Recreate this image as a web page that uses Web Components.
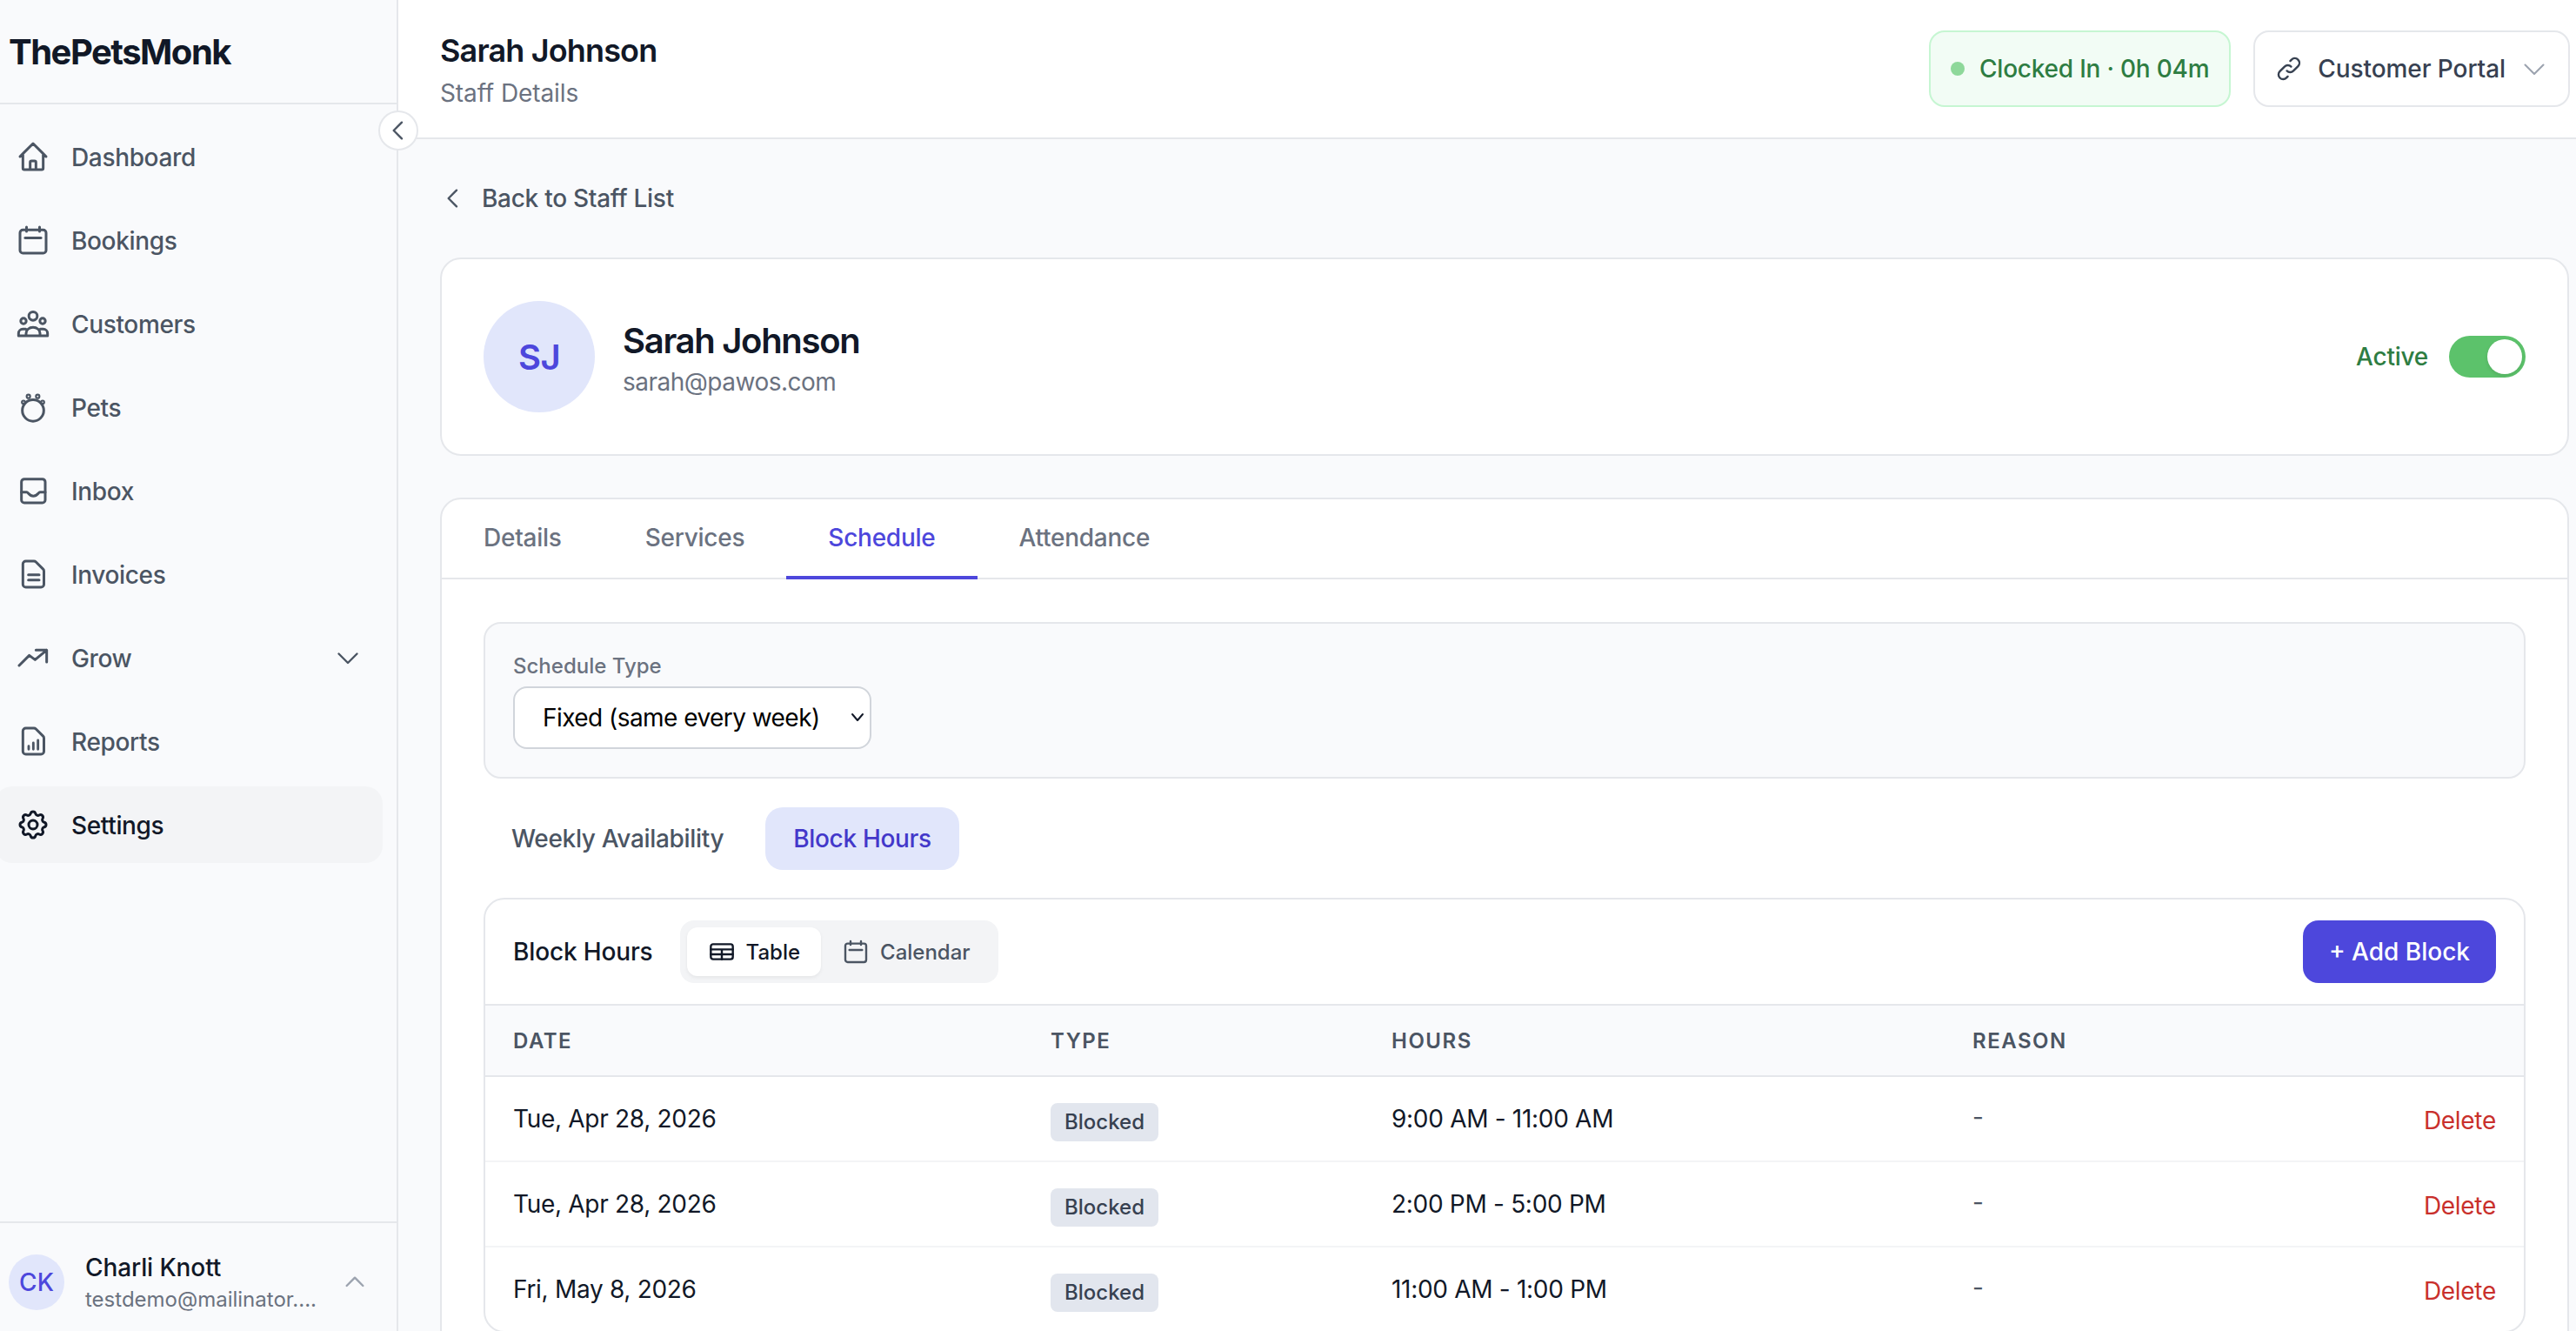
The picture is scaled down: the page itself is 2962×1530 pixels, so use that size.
<!DOCTYPE html>
<html lang="en">
<head>
<meta charset="utf-8">
<title>ThePetsMonk - Staff Details</title>
<style>
html,body{margin:0;padding:0;width:2962px;height:1530px;overflow:hidden;background:#f9fafc;font-family:Inter,"Noto Sans",sans-serif;color:#111827}
</style>
</head>
<body>
<pm-app>
  <pm-sidebar slot="side"></pm-sidebar>
  <pm-topbar slot="top" title="Sarah Johnson" sub="Staff Details"></pm-topbar>
  <pm-back-link>Back to Staff List</pm-back-link>
  <pm-profile-card name="Sarah Johnson" email="sarah@pawos.com" initials="SJ"></pm-profile-card>
  <pm-tabs-card>
    <pm-schedule-type></pm-schedule-type>
    <pm-subtabs></pm-subtabs>
    <pm-block-table>
      <pm-block-row date="Tue, Apr 28, 2026" hours="9:00 AM - 11:00 AM"></pm-block-row>
      <pm-block-row date="Tue, Apr 28, 2026" hours="2:00 PM - 5:00 PM"></pm-block-row>
      <pm-block-row date="Fri, May 8, 2026" hours="11:00 AM - 1:00 PM"></pm-block-row>
    </pm-block-table>
  </pm-tabs-card>
</pm-app>
<script>
const ICONS={
home:'<path d="M3 12l2-2m0 0l7-7 7 7M5 10v10a1 1 0 001 1h3m10-11l2 2m-2-2v10a1 1 0 01-1 1h-3m-6 0a1 1 0 001-1v-4a1 1 0 011-1h2a1 1 0 011 1v4a1 1 0 001 1m-6 0h6"/>',
calendar:'<rect x="3" y="5" width="18" height="16" rx="2"/><path d="M7.5 3v3M16.5 3v3M6.5 10.5h11"/>',
users:'<circle cx="12" cy="6.8" r="2.9"/><circle cx="5.4" cy="10.2" r="1.9"/><circle cx="18.6" cy="10.2" r="1.9"/><path d="M2 20.4h20M7.2 20.4v-1.6c0-2.4 2.1-4.3 4.8-4.3s4.8 1.9 4.8 4.3v1.6M2 20.4v-1.7c0-1.6 1.3-2.9 3-2.9h2M22 20.4v-1.7c0-1.6-1.3-2.9-3-2.9h-2"/>',
paw:'<circle cx="12" cy="14.3" r="7.4"/><circle cx="8.8" cy="4.6" r="1.2" stroke-width="1.3"/><circle cx="15.2" cy="4.6" r="1.2" stroke-width="1.3"/><circle cx="5.4" cy="8.6" r="1.1" stroke-width="1.3"/><circle cx="18.6" cy="8.6" r="1.1" stroke-width="1.3"/>',
inbox:'<rect x="4" y="4" width="16.4" height="16.4" rx="2"/><path d="M4 13h3.6c1.2 0 1.6 2.7 4.6 2.7s3.4-2.7 4.6-2.7h3.6"/>',
doc:'<path d="M7 3h5.6c.5 0 1 .2 1.4.6l4.9 4.9c.4.4.6.9.6 1.4V19a2 2 0 01-2 2H7a2 2 0 01-2-2V5a2 2 0 012-2z"/><path d="M8.8 12.4h7.4M8.8 16h7.4"/>',
report:'<path d="M7 3h5.6c.5 0 1 .2 1.4.6l4.9 4.9c.4.4.6.9.6 1.4V19a2 2 0 01-2 2H7a2 2 0 01-2-2V5a2 2 0 012-2z"/><path d="M9 15.4v2.2M12.2 13.2v4.4M15.4 11.4v6.2" stroke-width="1.7"/>',
trend:'<path d="M2.4 17.4l7-7 4 3 8-6.6M14 6.8h7.4V15"/>',
cog:'<path d="M10.325 4.317c.426-1.756 2.924-1.756 3.35 0a1.724 1.724 0 002.573 1.066c1.543-.94 3.31.826 2.37 2.37a1.724 1.724 0 001.065 2.572c1.756.426 1.756 2.924 0 3.35a1.724 1.724 0 00-1.066 2.573c.94 1.543-.826 3.31-2.37 2.37a1.724 1.724 0 00-2.572 1.065c-.426 1.756-2.924 1.756-3.35 0a1.724 1.724 0 00-2.573-1.066c-1.543.94-3.31-.826-2.37-2.37a1.724 1.724 0 00-1.065-2.572c-1.756-.426-1.756-2.924 0-3.35a1.724 1.724 0 001.066-2.573c-.94-1.543.826-3.31 2.37-2.37.996.608 2.296.07 2.572-1.065z"/><circle cx="12" cy="12" r="3"/>',
down:'<path d="M19 9l-7 7-7-7"/>',
up:'<path d="M5 15l7-7 7 7"/>',
left:'<path d="M15 19l-7-7 7-7"/>',
link:'<path d="M13.828 10.172a4 4 0 00-5.656 0l-4 4a4 4 0 105.656 5.656l1.102-1.101m-.758-4.899a4 4 0 005.656 0l4-4a4 4 0 00-5.656-5.656l-1.1 1.1"/>',
table:'<rect x="2.5" y="5.5" width="19" height="13" rx="2"/><path d="M2.5 10h19M2.5 14.2h19M12 10v8.5"/>'
};
function def(name,css,html,init){
  customElements.define(name,class extends HTMLElement{
    constructor(){super();this.attachShadow({mode:'open'});}
    connectedCallback(){
      const a=n=>this.getAttribute(n)||'';
      this.shadowRoot.innerHTML='<style>'+css+'</style>'+(typeof html==='function'?html(a):html);
      if(init)init.call(this);
    }
  });
}
def('pm-icon',':host{display:inline-flex;flex:none}svg{display:block;fill:none;stroke:currentColor;stroke-linecap:round;stroke-linejoin:round}',
 a=>`<svg viewBox="0 0 24 24" width="${a('size')||40}" height="${a('size')||40}" stroke-width="${a('sw')||1.8}">${ICONS[a('name')]}</svg>`);

def('pm-app',`:host{display:flex;width:2962px;height:1530px;overflow:hidden;position:relative}
 .main{flex:1;min-width:0;display:flex;flex-direction:column}
 .content{flex:1;min-height:0;overflow:hidden;padding:48px 8px 0 48px;display:flex;flex-direction:column}`,
 `<slot name="side"></slot><div class="main"><slot name="top"></slot><div class="content"><slot></slot></div></div>`);

def('pm-nav-item',`:host{display:flex;align-items:center;height:88px;padding:0 24px;gap:24px;border-radius:20px;font-size:28px;font-weight:500;color:#4b5563;line-height:36px;letter-spacing:-.35px}
 :host([active]){background:#f3f4f6;color:#111827}
 .l{flex:1;padding-top:2px}.c{margin-right:-2px}`,
 a=>`<pm-icon name="${a('icon')}"></pm-icon><span class="l"><slot></slot></span>${a('chev')?'<pm-icon class="c" name="down" size="36" sw="1.6"></pm-icon>':''}`);

def('pm-sidebar',`:host{display:flex;flex-direction:column;width:456px;flex:none;border-right:2px solid #e5e7eb;background:#f9fafc;position:relative;height:1530px;box-sizing:content-box}
 .logo{height:118px;border-bottom:2px solid #e5e7eb;display:flex;align-items:center;padding-left:10px;font-size:40px;font-weight:700;color:#111827;letter-spacing:-1.5px}
 nav{flex:1;display:flex;flex-direction:column;gap:8px;margin-left:-6px;padding:16px 16px 0 0}
 .collapse{position:absolute;top:127px;left:435px;width:46px;height:46px;box-sizing:border-box;border-radius:50%;border:2px solid #e5e7eb;background:#fff;color:#4b5563;display:flex;align-items:center;justify-content:center;z-index:5}
 .foot{height:112px;padding-top:12px;border-top:2px solid #e5e7eb;display:flex;align-items:center;padding-left:10px;gap:24px;position:relative}
 .av{width:64px;height:64px;border-radius:50%;background:#e1e6fb;color:#4d47dc;font-size:28px;font-weight:500;display:flex;align-items:center;justify-content:center;flex:none}
 .n{font-size:28px;font-weight:500;color:#111827;line-height:36px;letter-spacing:-.1px;padding-top:2px}
 .e{font-size:24px;color:#6b7280;line-height:36px;margin-top:1px;width:268px;white-space:nowrap}
 .u{color:#9ca3af;margin-left:2px}`,
 `<div class="logo">ThePetsMonk</div>
 <button class="collapse" style="padding:0"><pm-icon name="left" size="32" sw="1.8"></pm-icon></button>
 <nav>
  <pm-nav-item icon="home">Dashboard</pm-nav-item>
  <pm-nav-item icon="calendar">Bookings</pm-nav-item>
  <pm-nav-item icon="users">Customers</pm-nav-item>
  <pm-nav-item icon="paw">Pets</pm-nav-item>
  <pm-nav-item icon="inbox">Inbox</pm-nav-item>
  <pm-nav-item icon="doc">Invoices</pm-nav-item>
  <pm-nav-item icon="trend" chev="1">Grow</pm-nav-item>
  <pm-nav-item icon="report">Reports</pm-nav-item>
  <pm-nav-item icon="cog" active>Settings</pm-nav-item>
 </nav>
 <div class="foot"><div class="av">CK</div><div><div class="n">Charli Knott</div><div class="e">testdemo@mailinator....</div></div><pm-icon class="u" name="up" size="32" sw="1.8"></pm-icon></div>`);

def('pm-topbar',`:host{display:flex;align-items:center;height:158px;flex:none;background:#fff;border-bottom:2px solid #e5e7eb;padding:0 7px 0 48px}
 .t{flex:1}
 h1{margin:0;font-size:36px;font-weight:600;color:#111827;line-height:44px;padding-top:4px;letter-spacing:-.85px}
 p{margin:8px 0 0;font-size:28px;color:#6b7280;line-height:38px;letter-spacing:-.1px}
 .chip{height:88px;box-sizing:border-box;border-radius:18px;border:2px solid #c6f6d2;background:#f2fcf5;display:flex;align-items:center;font-size:28px;font-weight:500;color:#2e7d42;padding:0 23px;gap:17px;white-space:nowrap;letter-spacing:-.22px}
 .dot{width:16px;height:16px;border-radius:50%;background:#8ed89a;flex:none}
 .portal{margin-left:26px;height:88px;box-sizing:border-box;border-radius:18px;border:2px solid #e5e7eb;background:#fff;display:flex;align-items:center;font-size:28px;font-weight:500;color:#374151;padding:0 21px 0 23px;white-space:nowrap;letter-spacing:-.08px}
 .portal pm-icon:first-child{margin-right:17px}
 .portal .c{color:#9ca3af;margin-left:15px}`,
 a=>`<div class="t"><h1>${a('title')}</h1><p>${a('sub')}</p></div>
 <div class="chip"><span class="dot"></span>Clocked In · 0h 04m</div>
 <div class="portal"><pm-icon name="link" size="32" sw="1.8"></pm-icon>Customer Portal<pm-icon class="c" name="down" size="36" sw="1.4"></pm-icon></div>`);

def('pm-back-link',`:host{display:flex;align-items:center;height:40px;margin-bottom:48px;font-size:28px;font-weight:500;color:#4b5563;gap:17px;flex:none;letter-spacing:-.28px}
 pm-icon{margin-left:-1px}`,
 `<pm-icon name="left" size="32" sw="1.8"></pm-icon><span><slot></slot></span>`);

def('pm-profile-card',`:host{display:flex;align-items:center;flex:none;height:228px;box-sizing:border-box;background:#fff;border:2px solid #e5e7eb;border-radius:24px;padding:0 48px;margin-bottom:48px}
 .av{width:128px;height:128px;border-radius:50%;background:#e1e6fb;color:#4d47dc;font-size:40px;font-weight:600;display:flex;align-items:center;justify-content:center;flex:none;letter-spacing:-.5px}
 .i{flex:1;margin-left:32px;padding-top:4px}
 h2{margin:0;font-size:40px;font-weight:600;color:#111827;line-height:50px;letter-spacing:-1.3px}
 p{margin:0;font-size:28px;color:#6b7280;line-height:38px;margin-top:3px;letter-spacing:-.5px}
 .st{font-size:28px;font-weight:500;color:#2e7d42;margin-right:24px;letter-spacing:-.25px}
 .tg{width:88px;height:48px;border-radius:24px;background:#5cc26b;position:relative;flex:none}
 .k{position:absolute;top:4px;right:4px;width:40px;height:40px;border-radius:50%;background:#fff;box-shadow:0 2px 4px rgba(0,0,0,.1)}`,
 a=>`<div class="av">${a('initials')}</div><div class="i"><h2>${a('name')}</h2><p>${a('email')}</p></div><span class="st">Active</span><div class="tg"><span class="k"></span></div>`);

def('pm-tabs-card',`:host{display:block;flex:none;height:1200px;box-sizing:border-box;background:#fff;border:2px solid #e5e7eb;border-radius:24px}
 .tabs{display:flex;height:90px;border-bottom:2px solid #e5e7eb;letter-spacing:-.25px}
 .tab{height:92px;box-sizing:border-box;padding:0 48px 4px;display:flex;align-items:center;font-size:28px;font-weight:500;color:#6b7280}
 .tab.on{color:#4d47dc;border-bottom:4px solid #4d47dc;padding-bottom:0}
 .body{padding:49px 48px 48px;display:flex;flex-direction:column}`,
 `<div class="tabs"><div class="tab">Details</div><div class="tab">Services</div><div class="tab on">Schedule</div><div class="tab">Attendance</div></div><div class="body"><slot></slot></div>`);

def('pm-schedule-type',`:host{display:block;height:180px;box-sizing:border-box;background:#f9fafc;border:2px solid #e5e7eb;border-radius:20px;padding:32px}
 .l{font-size:24px;font-weight:500;color:#6b7280;line-height:34px;margin-bottom:6px}
 .s{width:412px;height:72px;box-sizing:border-box;background:#fff;border:2px solid #d1d5db;border-radius:16px;display:flex;align-items:center;padding-left:32px;font-size:28px;color:#000;position:relative;letter-spacing:-.55px}
 svg{position:absolute;left:386px;top:28px;fill:none;stroke:#111827;stroke-width:2;stroke-linecap:round;stroke-linejoin:round}`,
 `<div class="l">Schedule Type</div><div class="s">Fixed (same every week)<svg width="16" height="12" viewBox="0 0 16 12"><path d="M2 2l6 7 6-7"/></svg></div>`);

def('pm-subtabs',`:host{display:flex;gap:16px;margin-top:33px;height:72px;flex:none;letter-spacing:-.33px}
 .b{height:72px;box-sizing:border-box;padding:0 32px;border-radius:20px;display:flex;align-items:center;font-size:28px;font-weight:500;color:#4b5563}
 .b.on{background:#e1e6fb;color:#4338ca}`,
 `<div class="b">Weekly Availability</div><div class="b on">Block Hours</div>`);

def('pm-block-table',`:host{display:block;margin-top:32px;background:#fff;border:2px solid #e5e7eb;border-radius:24px;overflow:hidden}
 .hd{height:120px;padding:0 32px;display:flex;align-items:center;border-bottom:2px solid #e5e7eb}
 .ti{font-size:28px;font-weight:500;color:#111827;letter-spacing:-.15px}
 .seg{margin-left:31px;height:72px;box-sizing:border-box;padding:8px;border-radius:16px;background:#f3f4f6;display:flex}
 .sb{height:56px;box-sizing:border-box;padding:0 24px;display:flex;align-items:center;gap:12px;font-size:24px;font-weight:500;color:#4b5563;border-radius:12px}
 .sb.on{background:#fff;color:#111827;box-shadow:0 2px 4px rgba(0,0,0,.06)}
 .add{margin-left:auto;width:222px;height:72px;border-radius:18px;background:#4d47dc;color:#fff;font-size:28px;font-weight:500;display:flex;align-items:center;justify-content:center}
 .th{display:grid;grid-template-columns:618px 392px 668px 1fr;height:80px;align-items:center;padding:0 32px;background:#f9fafc;border-bottom:2px solid #e5e7eb;font-size:24px;font-weight:600;letter-spacing:1.5px;color:#4b5563}`,
 `<div class="hd"><span class="ti">Block Hours</span><div class="seg"><div class="sb on"><pm-icon name="table" size="32" sw="1.8"></pm-icon>Table</div><div class="sb"><pm-icon name="calendar" size="32" sw="1.8"></pm-icon>Calendar</div></div><div class="add">+ Add Block</div></div>
 <div class="th"><span>DATE</span><span>TYPE</span><span>HOURS</span><span>REASON</span></div><slot></slot>`);

def('pm-block-row',`:host{display:grid;grid-template-columns:618px 392px 668px 1fr;height:96px;align-items:center;padding:0 32px;border-bottom:2px solid #f3f4f6;font-size:28px;color:#111827;letter-spacing:-.3px}
 :host(:last-child){border-bottom:none}
 .bd{display:inline-flex;align-items:center;justify-content:center;width:124px;height:44px;margin-top:7px;border-radius:8px;background:#e2e6ee;color:#374151;font-size:24px;font-weight:500;letter-spacing:0}
 .d{justify-self:end;color:#c9302c;margin-top:4px}
 .m{color:#4b5563}`,
 a=>`<span>${a('date')}</span><span><span class="bd">Blocked</span></span><span>${a('hours')}</span><span style="display:flex;justify-content:space-between"><span class="m">-</span><span class="d">Delete</span></span>`);
</script>
</body>
</html>
